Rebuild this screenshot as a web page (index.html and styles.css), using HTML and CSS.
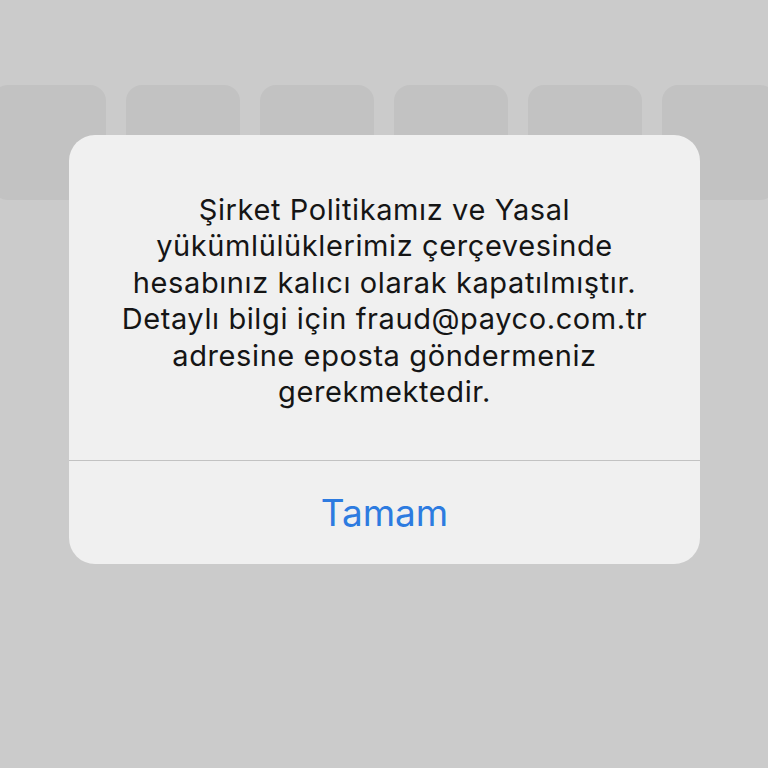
FILE: index.html
```html
<!DOCTYPE html>
<html lang="tr">
<head>
<meta charset="utf-8">
<link rel="stylesheet" href="styles.css">
</head>
<body>
<div class="screen">
  <div class="tiles">
    <div class="tile"></div>
    <div class="tile"></div>
    <div class="tile"></div>
    <div class="tile"></div>
    <div class="tile"></div>
    <div class="tile"></div>
  </div>
  <div class="alert">
    <div class="message">Şirket Politikamız ve Yasal<br>yükümlülüklerimiz çerçevesinde<br>hesabınız kalıcı olarak kapatılmıştır.<br>Detaylı bilgi için fraud@payco.com.tr<br>adresine eposta göndermeniz<br>gerekmektedir.</div>
    <div class="action">Tamam</div>
  </div>
</div>
</body>
</html>
```
FILE: styles.css
```css
html, body {
  margin: 0;
  padding: 0;
  background: #cbcbcb;
}
.screen {
  position: relative;
  width: 768px;
  height: 768px;
  overflow: hidden;
  background: #cbcbcb;
}
.tiles {
  display: flex;
  gap: 20px;
  padding-top: 85px;
  margin-left: -8px;
}
.tile {
  flex: 0 0 114px;
  height: 115px;
  border-radius: 16px;
  background: #c2c2c2;
}
.alert {
  position: absolute;
  left: 69px;
  top: 135px;
  width: 631px;
  height: 429px;
  border-radius: 26px;
  background: #f0f0f0;
  display: flex;
  flex-direction: column;
  font-family: "Inter", "Noto Sans", sans-serif;
}
.message {
  height: 326px;
  box-sizing: border-box;
  padding-top: 57px;
  text-align: center;
  font-size: 29px;
  letter-spacing: 0.6px;
  line-height: 36.4px;
  color: #151515;
  border-bottom: 1px solid #c2c2c2;
}
.action {
  flex: 1;
  display: flex;
  align-items: center;
  justify-content: center;
  font-size: 37px;
  color: #2d7be0;
}
```
